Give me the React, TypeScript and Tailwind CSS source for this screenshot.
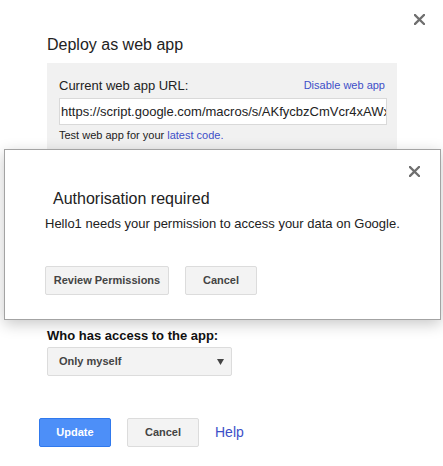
import { useState } from "react";

const font = { fontFamily: '"Liberation Sans", Arial, sans-serif' };

function CloseIcon() {
  return (
    <svg width="11" height="11" viewBox="0 0 11 11">
      <path d="M1 1L10 10M10 1L1 10" stroke="#6f6f6f" strokeWidth="2.3" strokeLinecap="square" />
    </svg>
  );
}

function GrayButton({ label, className = "" }: { label: string; className?: string }) {
  return (
    <button
      className={
        "h-[29px] rounded-[2px] border border-[#dcdcdc] bg-[#f3f3f3] text-[11px] font-bold text-[#444] " +
        className
      }
    >
      {label}
    </button>
  );
}

export default function App() {
  const [access] = useState("Only myself");
  const url = "https://script.google.com/macros/s/AKfycbzCmVcr4xAWxq3rT9bLk2/exec";

  return (
    <div className="relative h-[466px] w-[443px] overflow-hidden bg-white text-[#222]" style={font}>
      {/* fecha */}
      <div className="flex justify-end pr-[18px] pt-[14px]">
        <CloseIcon />
      </div>

      <h1 className="mt-[10px] pl-[47px] text-[16px] leading-[20px]">Deploy as web app</h1>

      {/* painel da URL */}
      <div className="ml-[47px] mt-[8px] w-[350px] bg-[#f1f1f1] pb-[20px] pl-[12px] pr-[10px] pt-[15px]">
        <div className="flex items-start justify-between">
          <span className="text-[13px] leading-[16px]">Current web app URL:</span>
          <a className="mr-[2px] text-[11px] leading-[14px] text-[#3d4fc8]">Disable web app</a>
        </div>
        <input
          readOnly
          value={url}
          className="mt-[4px] block h-[27px] w-[328px] border border-[#d9d9d9] bg-white pl-[1px] text-[13px] text-[#222] outline-none"
          style={font}
        />
        <p className="mt-[3px] text-[11px] leading-[14px]">
          Test web app for your <a className="text-[#3d4fc8]">latest code.</a>
        </p>
      </div>

      {/* acesso */}
      <div className="mt-[166px] pl-[47px]">
        <p className="text-[13px] font-bold leading-[16px] text-[#111]">Who has access to the app:</p>
        <div className="mt-[3px] flex h-[29px] w-[185px] items-center justify-between rounded-[2px] border border-[#dcdcdc] bg-[#f3f3f3] pl-[11px] pr-[7px]">
          <span className="text-[11px] font-bold text-[#444]">{access}</span>
          <svg width="7" height="7" viewBox="0 0 7 7">
            <path d="M0 1H7L3.5 7Z" fill="#444" />
          </svg>
        </div>
      </div>

      {/* botões */}
      <div className="ml-[39px] mt-[42px] flex items-center gap-[16px]">
        <button className="h-[29px] w-[72px] rounded-[2px] border border-[#3079ed] bg-[#4d8ff8] text-[11px] font-bold text-white">
          Update
        </button>
        <GrayButton label="Cancel" className="w-[72px]" />
        <a className="text-[14px] text-[#3d4fc8]">Help</a>
      </div>

      {/* diálogo de autorização */}
      <div className="absolute left-[4px] top-[149px] h-[171px] w-[437px] border border-[#a3a3a3] bg-white shadow-[0_4px_14px_rgba(0,0,0,0.22)]">
        <div className="flex justify-end pr-[20px] pt-[16px]">
          <CloseIcon />
        </div>
        <h2 className="mt-[12px] pl-[48px] text-[16px] leading-[20px]">Authorisation required</h2>
        <p className="mt-[7px] pl-[40px] text-[13px] leading-[16px]">
          Hello1 needs your permission to access your data on Google.
        </p>
        <div className="ml-[40px] mt-[34px] flex gap-[16px]">
          <GrayButton label="Review Permissions" className="w-[124px]" />
          <GrayButton label="Cancel" className="w-[72px]" />
        </div>
      </div>
    </div>
  );
}
